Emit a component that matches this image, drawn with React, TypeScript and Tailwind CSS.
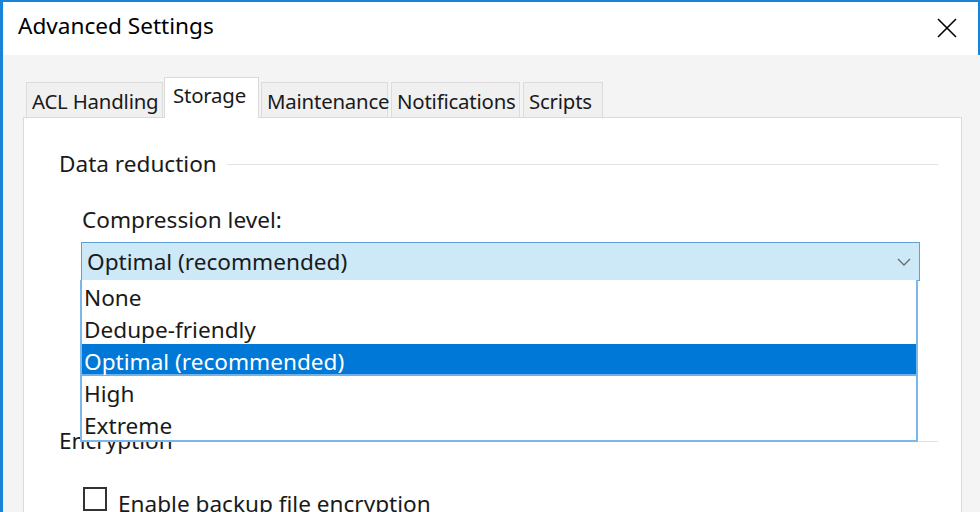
import React from 'react';

const tabs: { label: string; w: string }[] = [
    { label: 'ACL Handling', w: 'w-[137px]' },
    { label: 'Storage', w: 'w-[95px]' },
    { label: 'Maintenance', w: 'w-[127px]' },
    { label: 'Notifications', w: 'w-[129px]' },
    { label: 'Scripts', w: 'w-[80px]' },
];
const levels = ['None', 'Dedupe-friendly', 'Optimal (recommended)', 'High', 'Extreme'];

function GroupHeader({ label }: { label: string }) {
    return (
        <div className="flex items-center h-[30px]">
            <span className="text-[22.6px] text-[#1a1a1a]">{label}</span>
            <div className="flex-1 h-px bg-[#e3e3e3] ml-[10px]" />
        </div>
    );
}

export default function App() {
    const font = { fontFamily: '"Noto Sans", "Open Sans", sans-serif' };
    return (
        <div
            className="relative w-[980px] h-[512px] overflow-hidden bg-[#1883d7] pl-[3px] pt-[2px]"
            style={font}
        >
            {/* title bar */}
            <div className="flex items-center justify-between h-[53px] bg-white mr-[2px] pl-[15px] pr-[20px]">
                <span className="text-[22.6px] text-black leading-none -mt-[5px]">Advanced Settings</span>
                <svg width="22" height="22" viewBox="0 0 22 22" className="-mt-[2px]">
                    <path d="M2 2 L20 20 M20 2 L2 20" stroke="#000" strokeWidth="1.6" />
                </svg>
            </div>

            {/* dialog body */}
            <div className="h-full bg-[#f4f4f4] pl-[20px] pr-[18px] pt-[22px]">
                <div className="flex items-end pl-[3px] h-[40px]">
                    {tabs.map((t) =>
                        t.label === 'Storage' ? (
                            <div
                                key={t.label}
                                className={`${t.w} relative z-10 -mb-px -ml-[2px] mr-[2px] h-[41px] pl-[8px] bg-white border border-b-0 border-[#dadada] text-[20.4px] tracking-[-0.2px] leading-[34px] text-[#1a1a1a] whitespace-nowrap`}
                            >
                                {t.label}
                            </div>
                        ) : (
                            <div
                                key={t.label}
                                className={`${t.w} h-[35px] pl-[5px] mr-[3px] bg-[#f0f0f0] border border-b-0 border-[#dcdcdc] text-[20.4px] tracking-[-0.2px] leading-[36px] text-[#1a1a1a] whitespace-nowrap`}
                            >
                                {t.label}
                            </div>
                        )
                    )}
                </div>

                <div className="bg-white border border-[#dadada] h-[420px] pl-[35px] pr-[23px] pt-[31px]">
                    <GroupHeader label="Data reduction" />

                    <div className="pl-[23px]">
                        <div className="mt-[26px] h-[30px] text-[22.6px] leading-[30px] text-[#1a1a1a]">
                            Compression level:
                        </div>
                        <div className="mt-[7px] mr-[18px] -ml-[1px] h-[39px] flex items-center justify-between bg-[#cde8f6] border border-[#5f9fd6] pl-[5px] pr-[8px]">
                            <span className="text-[22.6px] text-[#1a1a1a]">Optimal (recommended)</span>
                            <svg width="14" height="8" viewBox="0 0 14 8">
                                <path d="M1 1 L7 7 L13 1" fill="none" stroke="#6b6b6b" strokeWidth="1.3" />
                            </svg>
                        </div>
                    </div>

                    <div className="mt-[145px]">
                        <GroupHeader label="Encryption" />
                    </div>

                    <div className="mt-[31px] pl-[24px] flex items-start gap-[11px]">
                        <div className="w-[24px] h-[24px] border-2 border-[#333] bg-white shrink-0" />
                        <span className="mt-[2px] text-[22.6px] leading-[30px] text-[#1a1a1a]">
                            Enable backup file encryption
                        </span>
                    </div>
                </div>
            </div>

            {/* open dropdown list */}
            <div className="absolute left-[80px] top-[280px] w-[838px] bg-white border-2 border-t-0 border-[#7ab8ec]">
                {levels.map((l) => (
                    <div
                        key={l}
                        className={
                            l === 'Optimal (recommended)'
                                ? 'h-[32px] pl-[2px] bg-[#0078d7] text-white text-[22.6px] leading-[35px] border-b-2 border-[#6fb1ea]'
                                : 'h-[32px] pl-[2px] text-[#1a1a1a] text-[22.6px] leading-[35px]'
                        }
                    >
                        {l}
                    </div>
                ))}
            </div>
        </div>
    );
}
